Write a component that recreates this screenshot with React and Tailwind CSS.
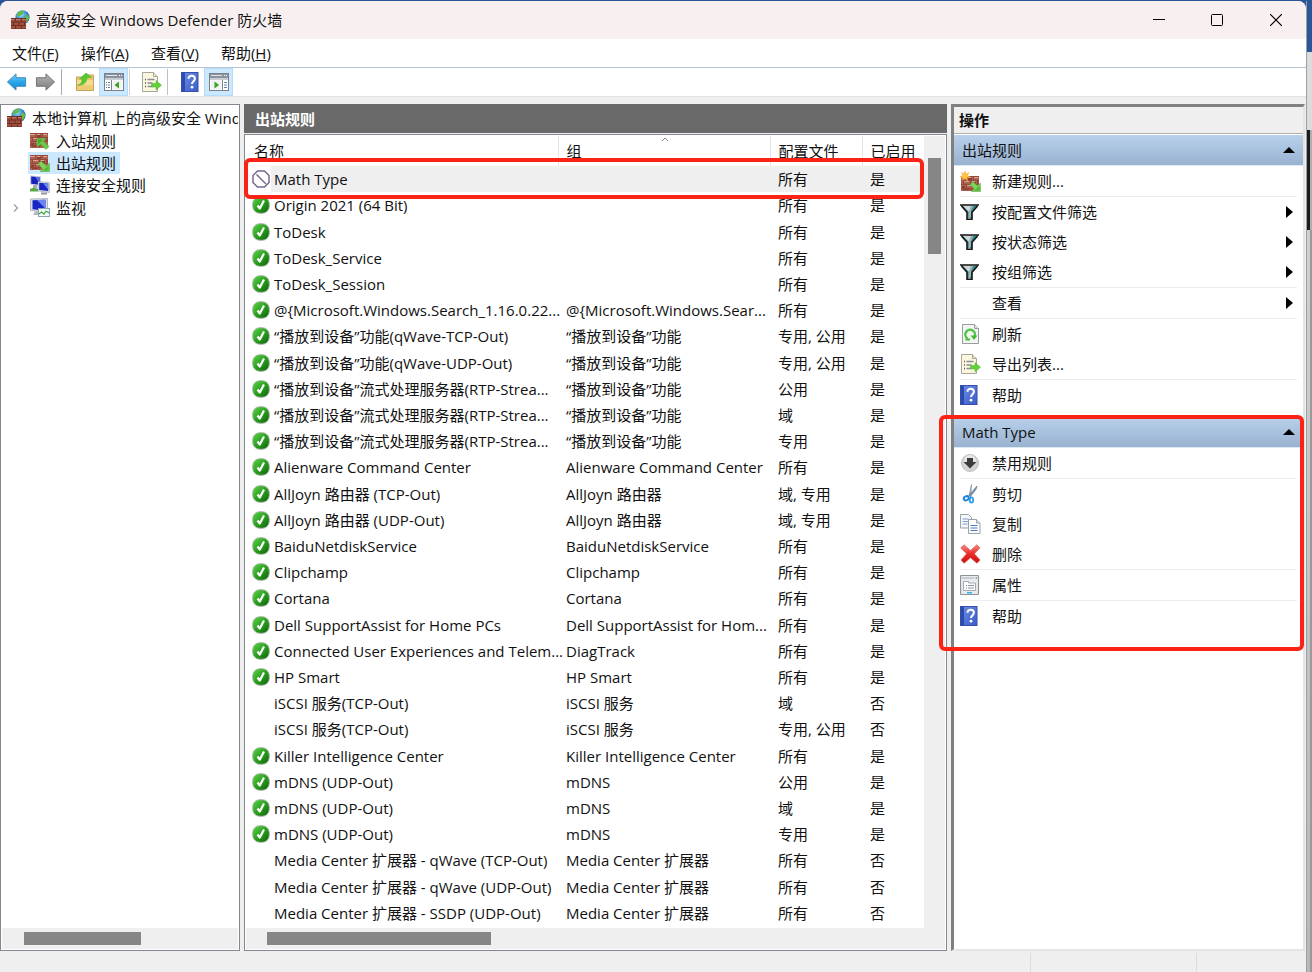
import { useState } from "react";

const rules = [
  { status: "blocked", name: "Math Type", group: "", profile: "所有", enabled: "是" },
  { status: "allow", name: "Origin 2021 (64 Bit)", group: "", profile: "所有", enabled: "是" },
  { status: "allow", name: "ToDesk", group: "", profile: "所有", enabled: "是" },
  { status: "allow", name: "ToDesk_Service", group: "", profile: "所有", enabled: "是" },
  { status: "allow", name: "ToDesk_Session", group: "", profile: "所有", enabled: "是" },
  { status: "allow", name: "@{Microsoft.Windows.Search_1.16.0.22...", group: "@{Microsoft.Windows.Sear...", profile: "所有", enabled: "是" },
  { status: "allow", name: "“播放到设备”功能(qWave-TCP-Out)", group: "“播放到设备”功能", profile: "专用, 公用", enabled: "是" },
  { status: "allow", name: "“播放到设备”功能(qWave-UDP-Out)", group: "“播放到设备”功能", profile: "专用, 公用", enabled: "是" },
  { status: "allow", name: "“播放到设备”流式处理服务器(RTP-Strea...", group: "“播放到设备”功能", profile: "公用", enabled: "是" },
  { status: "allow", name: "“播放到设备”流式处理服务器(RTP-Strea...", group: "“播放到设备”功能", profile: "域", enabled: "是" },
  { status: "allow", name: "“播放到设备”流式处理服务器(RTP-Strea...", group: "“播放到设备”功能", profile: "专用", enabled: "是" },
  { status: "allow", name: "Alienware Command Center", group: "Alienware Command Center", profile: "所有", enabled: "是" },
  { status: "allow", name: "AllJoyn 路由器 (TCP-Out)", group: "AllJoyn 路由器", profile: "域, 专用", enabled: "是" },
  { status: "allow", name: "AllJoyn 路由器 (UDP-Out)", group: "AllJoyn 路由器", profile: "域, 专用", enabled: "是" },
  { status: "allow", name: "BaiduNetdiskService", group: "BaiduNetdiskService", profile: "所有", enabled: "是" },
  { status: "allow", name: "Clipchamp", group: "Clipchamp", profile: "所有", enabled: "是" },
  { status: "allow", name: "Cortana", group: "Cortana", profile: "所有", enabled: "是" },
  { status: "allow", name: "Dell SupportAssist for Home PCs", group: "Dell SupportAssist for Hom...", profile: "所有", enabled: "是" },
  { status: "allow", name: "Connected User Experiences and Telem...", group: "DiagTrack", profile: "所有", enabled: "是" },
  { status: "allow", name: "HP Smart", group: "HP Smart", profile: "所有", enabled: "是" },
  { status: "", name: "iSCSI 服务(TCP-Out)", group: "iSCSI 服务", profile: "域", enabled: "否" },
  { status: "", name: "iSCSI 服务(TCP-Out)", group: "iSCSI 服务", profile: "专用, 公用", enabled: "否" },
  { status: "allow", name: "Killer Intelligence Center", group: "Killer Intelligence Center", profile: "所有", enabled: "是" },
  { status: "allow", name: "mDNS (UDP-Out)", group: "mDNS", profile: "公用", enabled: "是" },
  { status: "allow", name: "mDNS (UDP-Out)", group: "mDNS", profile: "域", enabled: "是" },
  { status: "allow", name: "mDNS (UDP-Out)", group: "mDNS", profile: "专用", enabled: "是" },
  { status: "", name: "Media Center 扩展器 - qWave (TCP-Out)", group: "Media Center 扩展器", profile: "所有", enabled: "否" },
  { status: "", name: "Media Center 扩展器 - qWave (UDP-Out)", group: "Media Center 扩展器", profile: "所有", enabled: "否" },
  { status: "", name: "Media Center 扩展器 - SSDP (UDP-Out)", group: "Media Center 扩展器", profile: "所有", enabled: "否" },
];

const Bricks = () => (
  <>
    <rect x="0" y="2" width="18" height="15" fill="#94493b" />
    <path
      d="M0 3h5v3H0zM6 3h6v3H6zM13 3h5v3h-5zM0 7h2v3H0zM3 7h6v3H3zM10 7h6v3h-6zM0 11h5v3H0zM6 11h6v3H6zM13 11h5v3h-5zM0 15h2v2H0zM3 15h6v2H3zM10 15h6v2h-6z"
      fill="#b06250"
    />
    <path d="M0 3h5v1H0zM13 3h4v1h-4zM3 7h5v1H3zM6 11h4v1H6zM7 3h3v1H7zM11 7h3v1h-3z" fill="#dba696" />
    <path d="M7 4h4v2H7zM1 12h3v2H1zM11 8h4v2h-4zM3 15h5v1H3z" fill="#8a3c30" />
  </>
);

const FirewallIcon = () => (
  <svg width="20" height="20" viewBox="0 0 20 20" aria-hidden="true">
    <defs>
      <radialGradient id="globe" cx="0.4" cy="0.3" r="0.8">
        <stop offset="0" stopColor="#a8e2ff" />
        <stop offset="0.5" stopColor="#2f86d8" />
        <stop offset="1" stopColor="#123f93" />
      </radialGradient>
    </defs>
    <circle cx="12.5" cy="7.2" r="7" fill="url(#globe)" />
    <path d="M8 2.500c2-2 4-2 6-1.500-1 2-1 3-2 4-2 0-3 2-5 2 0-2 0-3 1-4.500zM15.500 5c2-1 3 0 3.500 2 0 2-1 4-3 6-1-2-2-5-.5-8z" fill="#63b94a" />
    <rect x="1" y="8" width="15" height="11" fill="#6f3026" />
    <path
      d="M1 9h4v2.500H1zM6 9h5v2.500H6zM12 9h4v2.500h-4zM1 12.500h2V15H1zM4 12.500h4.500V15H4zM9.500 12.500H14V15H9.500zM15 12.500h1V15h-1zM1 16h4v2.500H1zM6 16h5v2.500H6zM12 16h4v2.500h-4z"
      fill="#a14e3e"
    />
    <path d="M1 9h3v1H1zM6 9h4v1H6zM12 9h3v1h-3z" fill="#c17c6b" />
  </svg>
);

const InboundIcon = () => (
  <svg width="20" height="19" viewBox="0 0 20 19" aria-hidden="true">
    <Bricks />
    <path d="M7 7.500h9l-2.400 2.700 5.400 5.300-3 3-5.400-5.300L7 16z" fill="#6cc94d" stroke="#4aa52f" strokeWidth="0.5" />
    <path d="M8 8.500h5.500L8 13.500z" fill="#49a82f" />
  </svg>
);

const OutboundIcon = () => (
  <svg width="20" height="19" viewBox="0 0 20 19" aria-hidden="true">
    <Bricks />
    <path d="M19.500 18.500h-9.500l2.700-2.600L8 11 11 8l5.500 4.900 3-2.900z" fill="#7ad45c" stroke="#4aa52f" strokeWidth="0.5" />
    <path d="M18.700 17.700h-6l6-5.700z" fill="#56b53b" />
  </svg>
);

const NewRuleIcon = () => (
  <svg width="21" height="21" viewBox="0 0 21 21" aria-hidden="true">
    <g transform="translate(1 3)">
      <Bricks />
    </g>
    <path d="M20.500 20.500h-9l2.700-2.600-4.200-4.400 3-3 4.500 4.300 3-2.700z" fill="#7ad45c" stroke="#4aa52f" strokeWidth="0.5" />
    <path d="M19.700 19.700h-5.700l5.700-5.200z" fill="#56b53b" />
    <path d="M5 0l1 3 3-1.500L7.500 4.500 10 6 7 6.500 7.500 10 5 7.500 2 9.500 3 6.500 0 5.500l3-1L1.500 1.500 4 3z" fill="#ffc640" stroke="#e89a1c" strokeWidth="0.4" />
  </svg>
);

const ConnectionIcon = () => (
  <svg width="20" height="20" viewBox="0 0 20 20" aria-hidden="true">
    <path d="M0 .5l11 .8v9.500L0 9.500z" fill="#c5cbe0" />
    <path d="M1.200 1.500l8.500.7v7.500l-8.500-1z" fill="#1622b8" />
    <path d="M5 1.800l4.700.4v6z" fill="#5a6be8" />
    <path d="M3 10h4v3H3z" fill="#a9adb5" />
    <path d="M0 14l4-1.500 4 1.500v2.500H0z" fill="#5aa846" />
    <path d="M8 6.500l11.500 1v10L8 16z" fill="#d9dde6" stroke="#8d93a5" strokeWidth="0.5" />
    <path d="M9.200 7.800l9 .8v7.500l-9-1z" fill="#1827c4" />
    <path d="M13 8.200l5.200.4v6z" fill="#6c86f0" />
    <path d="M11 17.500h6v2h-6z" fill="#92969f" />
  </svg>
);

const MonitorIcon = () => (
  <svg width="20" height="20" viewBox="0 0 20 20" aria-hidden="true">
    <path d="M.5 1l17-.5v14L.5 12.500z" fill="#d9dde6" stroke="#8d93a5" strokeWidth="0.6" />
    <path d="M2.500 2.200l13-.5v11l-13-1.500z" fill="#1827c4" />
    <path d="M7 2l8.500-.3v9z" fill="#6c86f0" />
    <path d="M5 13.500h6l1 3.500H3z" fill="#b4b8bf" />
    <rect x="8.500" y="10.500" width="11" height="8" fill="#f4fbff" stroke="#8aa4b5" />
    <path d="M9 16l2.500-2 2.500 2 2-3 3 2" fill="none" stroke="#3fa83a" strokeWidth="1.200" />
  </svg>
);

const ArrowIcon = ({ forward }) => (
  <svg width="21" height="20" viewBox="0 0 22 20" aria-hidden="true">
    <defs>
      <linearGradient id="back" x2="0" y2="1">
        <stop offset="0" stopColor="#7fd0f8" />
        <stop offset="0.5" stopColor="#28a5ea" />
        <stop offset="1" stopColor="#1b86cc" />
      </linearGradient>
      <linearGradient id="forward" x2="0" y2="1">
        <stop offset="0" stopColor="#b4b4b4" />
        <stop offset="1" stopColor="#7c7c7c" />
      </linearGradient>
    </defs>
    {forward ? (
      <path d="M20.500 10l-9-8.500v4h-10v9h10v4z" fill="url(#forward)" stroke="#707070" strokeLinejoin="round" />
    ) : (
      <path d="M1.500 10l9-8.500v4h10v9h-10v4z" fill="url(#back)" stroke="#3a86b8" strokeLinejoin="round" />
    )}
  </svg>
);

const FolderIcon = () => (
  <svg width="20" height="20" viewBox="0 0 20 20" aria-hidden="true">
    <path d="M1.500 5h6l1.500-2h9.500v15.500h-17z" fill="#e9c56c" stroke="#c4a45a" />
    <path d="M2 8h16v10H2z" fill="#f6dc93" />
    <path d="M2 13h16v5H2z" fill="#efcb74" />
    <path d="M2.500 13c3.500-.5 4.500-3 4.500-6H4.500L11 1l5.500 4.500H12c0 5-4 8.500-9.500 7.500z" fill="#57c92f" stroke="#4aaa2c" strokeWidth="0.5" />
  </svg>
);

const PaneIcon = ({ right }) => (
  <svg width="20" height="18" viewBox="0 0 20 18" aria-hidden="true">
    <rect x="0.500" y="0.500" width="19" height="17" fill="#fff" stroke="#7a818b" />
    <rect x="1" y="1" width="18" height="4" fill="#8b939e" />
    <path d="M2 2.500h11" stroke="#dfe4ea" />
    <path d="M15 2.500h1M17 2.500h1" stroke="#fff" />
    <rect x="1" y="5" width="18" height="2" fill="#c9ced5" />
    {right ? (
      <>
        <path d="M13.500 7v10.500" stroke="#7a818b" />
        <path d="M15 9.500h3M15 12h3M15 14.500h3" stroke="#5c7ea8" />
        <rect x="2" y="7.500" width="10.500" height="9" fill="#f0f2f4" />
        <path d="M5.500 8.500v7l4.500-3.500z" fill="#35a31f" />
      </>
    ) : (
      <>
        <path d="M7.500 7v10.500" stroke="#7a818b" />
        <path d="M2 9.500h1M4 9.500h2M2 12h1M4 12h2M2 14.500h1M4 14.500h2" stroke="#5c7ea8" />
        <rect x="8.500" y="7.500" width="10" height="9" fill="#f0f2f4" />
        <path d="M15 8.500v7L10.500 12z" fill="#35a31f" />
      </>
    )}
  </svg>
);

const ExportIcon = () => (
  <svg width="21" height="20" viewBox="0 0 21 20" aria-hidden="true">
    <path d="M1.500.5h11l4 4v15h-15z" fill="#fbf7df" stroke="#a5a598" />
    <path d="M12.500.5v4h4" fill="#e9e4c4" stroke="#a5a598" />
    <path d="M4 7.500h1M4 11h1M4 14.500h1" stroke="#555" strokeWidth="1.300" />
    <path d="M6.500 7.500h7M6.500 11h5M6.500 14.500h5" stroke="#8b8b9c" strokeWidth="1.300" />
    <path d="M10.500 11.500h4.500V8.500l5.500 4.700-5.500 4.700v-3h-4.500z" fill="#62d239" stroke="#4cb32f" strokeWidth="0.5" />
  </svg>
);

const HelpIcon = () => (
  <svg width="18" height="20" viewBox="0 0 18 20" aria-hidden="true">
    <defs>
      <linearGradient id="book" x2="1" y2="1">
        <stop offset="0" stopColor="#6f8fe6" />
        <stop offset="1" stopColor="#3a5cc6" />
      </linearGradient>
    </defs>
    <rect x="0.500" y="0.500" width="16.500" height="19" fill="url(#book)" stroke="#3550a8" />
    <rect x="1" y="1" width="3" height="18" fill="#2c4bb0" />
    <path
      d="M7.500 6.800C7.500 4.600 9 3.800 10.700 3.800s3.200 1 3.200 2.900c0 2.300-2.900 2.700-2.900 5.300"
      fill="none"
      stroke="#fff"
      strokeWidth="2"
    />
    <circle cx="11" cy="15.200" r="1.400" fill="#fff" />
  </svg>
);

const FilterIcon = () => (
  <svg width="19" height="16" viewBox="0 0 19 16" aria-hidden="true">
    <path d="M1 1h17v1.500l-5.500 6V14.500H7V8.500l-6-6z" fill="#d4d7d7" />
    <path d="M11 2h6l-5 5.500V14H9.700V8z" fill="#1b9092" />
    <path d="M11 2h2.500l-2.500 5V13H9V7z" fill="#a9adad" />
    <path d="M2.500 2.500L8 8v6" fill="none" stroke="#14898b" strokeWidth="1.400" />
    <path d="M0 1h19M1.500 2l5.500 6.300V15.200h5V8.300L17.500 2" fill="none" stroke="#151515" strokeWidth="1.600" />
  </svg>
);

const RefreshIcon = () => (
  <svg width="20" height="20" viewBox="0 0 20 20" aria-hidden="true">
    <path d="M2.500.5h12l4 4v15h-16z" fill="#f3f5f3" stroke="#9a9e9a" />
    <path d="M14.500.5v4h4" fill="#dfe3df" stroke="#9a9e9a" />
    <path d="M7.500 14.500a4.800 4.800 0 1 1 7-2" fill="none" stroke="#4cc545" strokeWidth="2.400" />
    <path d="M10.500 11.500h7L14 16z" fill="#3fbd3a" />
    <path d="M5.500 15.500h4.500" stroke="#3fbd3a" strokeWidth="2" />
  </svg>
);

const DisableIcon = () => (
  <svg width="20" height="20" viewBox="0 0 20 20" aria-hidden="true">
    <circle cx="10" cy="10" r="8.500" fill="#d3d3d3" stroke="#c2c2c2" />
    <circle cx="10" cy="8" r="6" fill="#e6e6e6" />
    <path d="M7 5h6v4h3.500L10 15.500 3.500 9H7z" fill="#3c3c3c" />
  </svg>
);

const CutIcon = () => (
  <svg width="20" height="20" viewBox="0 0 20 20" aria-hidden="true">
    <path d="M11.500 0.500L9 12l1.500.8z" fill="#b9c6d4" stroke="#6a7f96" strokeWidth="0.6" />
    <path d="M17 2l-8 9 1.500 1.500 5.500-7z" fill="#8295aa" stroke="#5d7188" strokeWidth="0.6" />
    <ellipse cx="6.300" cy="14.300" rx="2.600" ry="2" fill="none" stroke="#1d86dd" strokeWidth="2" transform="rotate(-20 6.300 14.300)" />
    <ellipse cx="11.500" cy="16" rx="1.700" ry="2.700" fill="none" stroke="#2c9bee" strokeWidth="1.800" />
  </svg>
);

const CopyIcon = () => (
  <svg width="21" height="20" viewBox="0 0 21 20" aria-hidden="true">
    <path d="M.5.500h8l3 3V14H.5z" fill="#f5f7fa" stroke="#9aa1a8" />
    <path d="M2.500 5h6M2.500 7.500h6M2.500 10h5" stroke="#7d9fd0" />
    <path d="M8.500 5.500h8l3.500 3.500v10.500H8.500z" fill="#fdfdfd" stroke="#9aa1a8" />
    <path d="M16.500 5.500V9H20" fill="#e4e8ec" stroke="#9aa1a8" />
    <path d="M10.500 11.500h7M10.500 14h7M10.500 16.500h7" stroke="#4f7cc0" />
  </svg>
);

const DeleteIcon = () => (
  <svg width="21" height="20" viewBox="0 0 21 20" aria-hidden="true">
    <defs>
      <linearGradient id="cross" x2="0" y2="1">
        <stop offset="0" stopColor="#f58a84" />
        <stop offset="0.5" stopColor="#ea2a25" />
        <stop offset="1" stopColor="#c81010" />
      </linearGradient>
    </defs>
    <path
      d="M4 .8L10.500 6.500 16.800.8l3.200 3-5.600 6L20 16l-3 3.300-6.500-5.600L4 19.300 1 16l5.600-6.200L.8 4z"
      fill="url(#cross)"
      stroke="#dc5a55"
      strokeWidth="0.7"
      strokeLinejoin="round"
    />
  </svg>
);

const PropertiesIcon = () => (
  <svg width="20" height="20" viewBox="0 0 20 20" aria-hidden="true">
    <rect x="0.500" y="0.500" width="18" height="19" rx="1" fill="#e9ecee" stroke="#8c9399" strokeWidth="1.200" />
    <path d="M2 3h12" stroke="#a9b0b5" />
    <path d="M15.500 3h1.500" stroke="#4c5359" />
    <path d="M3.500 6.500h5v1.500h7v7.500h-12z" fill="#fff" stroke="#a3abb1" />
    <path d="M6 10.500h1M6 13h1" stroke="#2a9bd8" />
    <path d="M8 10.500h6M8 13h6" stroke="#8b939a" />
    <path d="M7 17.800h5" stroke="#35b5e8" strokeWidth="1.500" />
  </svg>
);

const AllowIcon = () => (
  <svg width="18" height="18" viewBox="0 0 18 18" className="block" aria-hidden="true">
    <defs>
      <linearGradient id="allow" x1="0" y1="0" x2="1" y2="1">
        <stop offset="0" stopColor="#5cd648" />
        <stop offset="0.55" stopColor="#279a1c" />
        <stop offset="1" stopColor="#0c5f08" />
      </linearGradient>
    </defs>
    <rect x="0.700" y="0.700" width="16.600" height="16.600" rx="7" fill="url(#allow)" stroke="#a9b8a7" />
    <path d="M5.500 9.500l2.300 3L12 4.500" fill="none" stroke="#fff" strokeWidth="2.200" strokeLinejoin="round" />
  </svg>
);

const BlockedIcon = () => (
  <svg width="18" height="18" viewBox="0 0 18 18" className="block" aria-hidden="true">
    <path d="M5.500 1h7L17 5.500v7L12.500 17h-7L1 12.500v-7z" fill="#fff" stroke="#75688c" strokeWidth="1.500" />
    <path d="M4.500 4.500l9.500 9.500" stroke="#75688c" strokeWidth="1.400" />
  </svg>
);

const menus = [
  { label: "文件", hotkey: "F" },
  { label: "操作", hotkey: "A" },
  { label: "查看", hotkey: "V" },
  { label: "帮助", hotkey: "H" },
];

const tree = [
  { id: "in", label: "入站规则", icon: <InboundIcon /> },
  { id: "out", label: "出站规则", icon: <OutboundIcon /> },
  { id: "conn", label: "连接安全规则", icon: <ConnectionIcon /> },
  { id: "monitor", label: "监视", icon: <MonitorIcon />, expandable: true },
];

const outboundActions = [
  [{ label: "新建规则...", icon: <NewRuleIcon /> }],
  [
    { label: "按配置文件筛选", icon: <FilterIcon />, more: true },
    { label: "按状态筛选", icon: <FilterIcon />, more: true },
    { label: "按组筛选", icon: <FilterIcon />, more: true },
  ],
  [{ label: "查看", more: true }],
  [
    { label: "刷新", icon: <RefreshIcon /> },
    { label: "导出列表...", icon: <ExportIcon /> },
  ],
  [{ label: "帮助", icon: <HelpIcon /> }],
];

const ruleActions = [
  [{ label: "禁用规则", icon: <DisableIcon /> }],
  [
    { label: "剪切", icon: <CutIcon /> },
    { label: "复制", icon: <CopyIcon /> },
    { label: "删除", icon: <DeleteIcon /> },
  ],
  [{ label: "属性", icon: <PropertiesIcon /> }],
  [{ label: "帮助", icon: <HelpIcon /> }],
];

const ToolButton = ({ label, active, children }) => (
  <button
    aria-label={label}
    className={
      active
        ? "flex h-7 w-[29px] items-center justify-center border border-[#b5dcfb] bg-[#cce8ff]"
        : "flex h-7 w-[29px] items-center justify-center hover:bg-[#e5f3ff]"
    }
  >
    {children}
  </button>
);

const ActionSection = ({ title, groups }) => (
  <section>
    <button className="flex h-[31px] w-full items-center justify-between border-b border-[#dfe8f2] bg-linear-to-b from-[#b9d1ea] to-[#98b2d1] pr-2 pl-2">
      <span>{title}</span>
      <svg width="12" height="6" viewBox="0 0 12 6" aria-hidden="true">
        <path d="M0 6l6-6 6 6z" fill="#000" />
      </svg>
    </button>
    <div className="divide-y divide-[#ededed] px-[6px]">
      {groups.map((group, i) => (
        <ul key={i}>
          {group.map((action) => (
            <li key={action.label}>
              <button className="flex h-[30px] w-full items-center pr-1 text-left hover:bg-[#e5f3ff]">
                <span className="flex w-8 shrink-0 items-center">{action.icon}</span>
                <span className="flex-1">{action.label}</span>
                {action.more && (
                  <svg width="7" height="12" viewBox="0 0 7 12" aria-hidden="true">
                    <path d="M0 0l7 6-7 6z" fill="#000" />
                  </svg>
                )}
              </button>
            </li>
          ))}
        </ul>
      ))}
    </div>
  </section>
);

const App = () => {
  const [selectedNode, setSelectedNode] = useState("out");
  const [selectedRule, setSelectedRule] = useState(0);

  return (
    <div className="flex h-screen bg-[#2a5599] pt-px font-['Open_Sans','Noto_Sans_CJK_SC',sans-serif] text-[15px] leading-5 text-[#111]">
      <div className="flex min-w-0 flex-1 flex-col overflow-hidden rounded-t-lg bg-[#efefef]">
        {/* Title bar */}
        <header className="flex h-[38px] shrink-0 items-center bg-[#f8f0f0] pl-[10px]">
          <FirewallIcon />
          <h1 className="ml-[6px] flex-1">高级安全 Windows Defender 防火墙</h1>
          <button aria-label="最小化" className="flex h-full w-[58px] items-center justify-center">
            <svg width="12" height="12" viewBox="0 0 12 12">
              <path d="M0 5.500h12" stroke="#000" />
            </svg>
          </button>
          <button aria-label="最大化" className="flex h-full w-[58px] items-center justify-center">
            <svg width="12" height="12" viewBox="0 0 12 12">
              <rect x="0.500" y="0.500" width="11" height="11" rx="1" fill="none" stroke="#000" />
            </svg>
          </button>
          <button aria-label="关闭" className="flex h-full w-[60px] items-center justify-center">
            <svg width="12" height="12" viewBox="0 0 12 12">
              <path d="M0 0l12 12M12 0L0 12" stroke="#000" strokeWidth="1.200" />
            </svg>
          </button>
        </header>

        {/* Menu bar */}
        <nav className="flex h-[29px] shrink-0 items-center gap-[22px] border-b border-[#b9c4cf] bg-white pl-3">
          {menus.map((menu) => (
            <button key={menu.hotkey}>
              {menu.label}(<span className="underline underline-offset-1">{menu.hotkey}</span>)
            </button>
          ))}
        </nav>

        {/* Toolbar */}
        <div className="flex h-[29px] shrink-0 items-center border-b border-[#e2e2e2] bg-white pl-[2px]">
          <ToolButton label="后退">
            <ArrowIcon />
          </ToolButton>
          <ToolButton label="前进">
            <ArrowIcon forward />
          </ToolButton>
          <div className="mr-2 ml-px h-[26px] w-px bg-[#a9a9a9]" />
          <ToolButton label="上一级">
            <FolderIcon />
          </ToolButton>
          <ToolButton label="显示控制台树" active>
            <PaneIcon />
          </ToolButton>
          <div className="mr-[7px] ml-px h-[26px] w-px bg-[#d0d0d0]" />
          <ToolButton label="导出列表">
            <ExportIcon />
          </ToolButton>
          <div className="mr-[7px] ml-px h-[26px] w-px bg-[#c0c0c0]" />
          <ToolButton label="帮助">
            <HelpIcon />
          </ToolButton>
          <ToolButton label="显示操作窗格" active>
            <PaneIcon right />
          </ToolButton>
        </div>

        <main className="flex min-h-0 flex-1 gap-1 pt-[7px]">
          {/* Console tree */}
          <aside className="flex w-[240px] shrink-0 flex-col overflow-hidden border border-[#828790] bg-white p-px">
            <ul className="grid h-[113px] auto-rows-fr pt-px">
              <li className="flex items-center gap-[6px] overflow-hidden pl-1 whitespace-nowrap">
                <span className="shrink-0">
                  <FirewallIcon />
                </span>
                <button>本地计算机 上的高级安全 Wind</button>
              </li>
              {tree.map((node) => (
                <li key={node.id} className="flex items-center pl-[9px]">
                  <span className="w-[17px]">
                    {node.expandable && (
                      <svg width="10" height="10" viewBox="0 0 10 10" aria-hidden="true">
                        <path d="M3 1.500L6.500 5 3 8.500" fill="none" stroke="#9a9a9a" strokeWidth="1.200" />
                      </svg>
                    )}
                  </span>
                  <button
                    onClick={() => setSelectedNode(node.id)}
                    className={
                      selectedNode === node.id
                        ? "flex h-[22px] items-center gap-[6px] bg-[#cce8ff] px-[2px] pr-1"
                        : "flex h-[22px] items-center gap-[6px] px-[2px] pr-1"
                    }
                  >
                    {node.icon}
                    {node.label}
                  </button>
                </li>
              ))}
            </ul>
            <div className="mt-auto h-[21px] bg-[#efefef] px-[22px] py-1">
              <div className="h-[13px] w-[117px] bg-[#868686]" />
            </div>
          </aside>

          {/* Rule list */}
          <section className="flex min-w-0 flex-1 flex-col">
            <h2 className="flex h-[29px] shrink-0 items-center bg-[#696969] pl-[11px] font-bold text-white">出站规则</h2>
            <div className="relative mt-px flex min-h-0 flex-1 flex-col border border-[#828790] bg-white p-px">
              <div className="flex min-h-0 flex-1">
                <div className="min-w-0 flex-1 overflow-hidden pb-[2px]">
                  <table className="h-full w-full table-fixed border-collapse text-left whitespace-nowrap">
                    <colgroup>
                      <col className="w-[25px]" />
                      <col />
                      <col className="w-[212px]" />
                      <col className="w-[92px]" />
                      <col className="w-[62px]" />
                    </colgroup>
                    <thead>
                      <tr className="h-[30px]">
                        <th colSpan={2} className="border-r border-[#e5e5e5] p-0 pl-2 font-normal">
                          名称
                        </th>
                        <th className="relative border-r border-[#e5e5e5] p-0 pl-2 font-normal">
                          组
                          <svg width="8" height="5" viewBox="0 0 8 5" className="absolute top-px left-[102px]" aria-hidden="true">
                            <path d="M1 4l3-3 3 3" fill="none" stroke="#8a8a8a" />
                          </svg>
                        </th>
                        <th className="border-r border-[#e5e5e5] p-0 pl-2 font-normal">配置文件</th>
                        <th className="p-0 pl-2 font-normal">已启用</th>
                      </tr>
                    </thead>
                    <tbody>
                      {rules.map((rule, i) => {
                        const cell = i === selectedRule ? "bg-[#efefef] p-0 pl-2" : "p-0 pl-2";
                        return (
                          <tr key={i} className="h-[26px]" onClick={() => setSelectedRule(i)}>
                            <td className="p-0 pl-[6px]">
                              {rule.status === "allow" && <AllowIcon />}
                              {rule.status === "blocked" && <BlockedIcon />}
                            </td>
                            <td className={i === selectedRule ? "bg-[#efefef] p-0 pl-[3px]" : "p-0 pl-[3px]"}>{rule.name}</td>
                            <td className={cell}>{rule.group}</td>
                            <td className={cell}>{rule.profile}</td>
                            <td className={cell}>{rule.enabled}</td>
                          </tr>
                        );
                      })}
                    </tbody>
                  </table>
                </div>
                <div className="w-[21px] shrink-0 bg-[#efefef] px-1 pt-[22px]">
                  <div className="h-24 w-[13px] bg-[#868686]" />
                </div>
              </div>
              <div className="h-[21px] shrink-0 bg-[#efefef] px-[21px] py-1">
                <div className="h-[13px] w-[224px] bg-[#868686]" />
              </div>
              {/* Highlight around the selected rule */}
              <div className="pointer-events-none absolute top-[23px] right-[22px] -left-px h-[41px] rounded-md border-4 border-[#fb2316]" />
            </div>
          </section>

          {/* Actions pane */}
          <aside className="mr-px flex w-[354px] shrink-0 flex-col border-t-3 border-r-2 border-b-2 border-l-3 border-t-[#808080] border-r-[#e4e4e4] border-b-[#e4e4e4] border-l-[#808080] bg-white">
            <h2 className="flex h-[27px] shrink-0 items-center border-b border-[#b0b0b0] bg-[#efefef] pl-[5px] font-bold">
              操作
            </h2>
            <div className="flex flex-col gap-[7px] pt-px">
              <ActionSection title="出站规则" groups={outboundActions} />
              <div className="relative">
                <ActionSection title="Math Type" groups={ruleActions} />
                <div className="pointer-events-none absolute -top-[2px] -right-px -bottom-[20px] -left-[15px] rounded-md border-4 border-[#fb2316]" />
              </div>
            </div>
          </aside>
        </main>

        {/* Status bar */}
        <footer className="flex h-[21px] shrink-0 justify-end pt-[2px]">
          <div className="w-[166px] border-l border-[#dcdcdc]" />
          <div className="w-[110px] border-l border-[#dcdcdc]" />
        </footer>
      </div>

      {/* Windows behind */}
      <div className="flex w-[6px] shrink-0 flex-col border-l border-[#9aa0a8]">
        <div className="h-[51px]" />
        <div className="h-[78px] bg-[#dcdcdc]" />
        <div className="h-[100px] border-r-2 border-[#b0b0b0] bg-[#1c1c1c]" />
        <div className="flex-1 border-r-2 border-[#999] bg-linear-to-b from-[#d0d0d0] to-[#b8b8b8]" />
      </div>
    </div>
  );
};

export default App;
